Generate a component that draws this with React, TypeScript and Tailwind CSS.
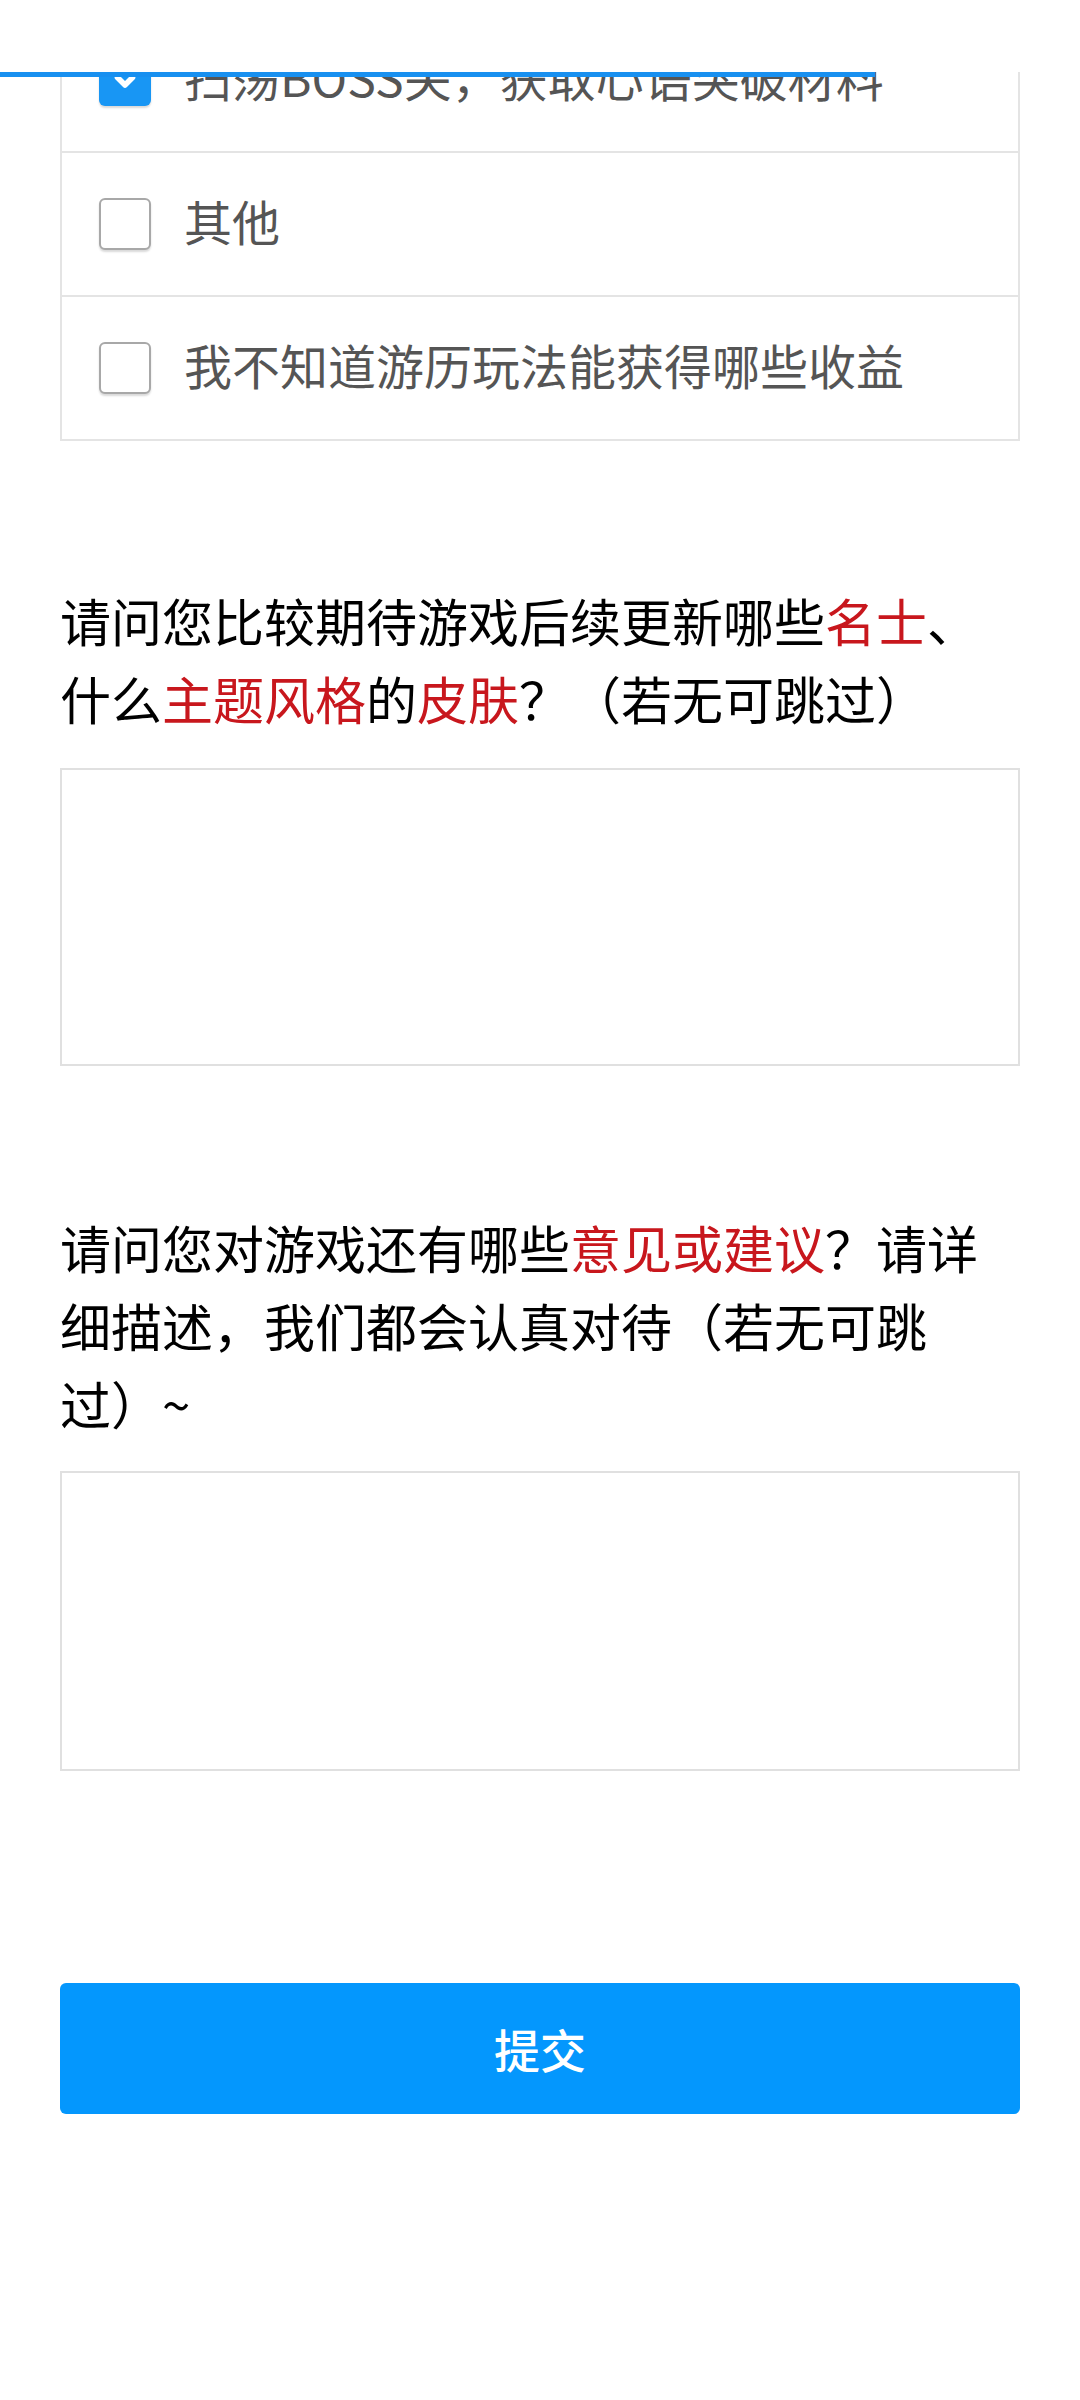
import { useState } from 'react'

const font = { fontFamily: '"Noto Sans CJK SC", "Noto Sans", sans-serif' }

type Option = { label: string; checked: boolean }

const initialOptions: Option[] = [
  { label: '扫荡BOSS关，获取心语突破材料', checked: true },
  { label: '其他', checked: false },
  { label: '我不知道游历玩法能获得哪些收益', checked: false },
]

function Checkbox({ checked }: { checked: boolean }) {
  if (checked) {
    return (
      <span className="flex h-[52px] w-[52px] shrink-0 items-center justify-center rounded-[6px] bg-[#1896f4] shadow-[0_2px_2px_rgba(0,0,0,0.15)]">
        <svg viewBox="0 0 24 24" className="h-[30px] w-[30px]" fill="none">
          <path d="M6 10 L12 16 L18 10" stroke="#fff" strokeWidth="4.5" strokeLinecap="round" strokeLinejoin="round" />
        </svg>
      </span>
    )
  }
  return (
    <span className="block h-[52px] w-[52px] shrink-0 rounded-[6px] border-2 border-[#a8a8a8] bg-white shadow-[0_2px_2px_rgba(0,0,0,0.15)]" />
  )
}

export default function App() {
  const [options, setOptions] = useState(initialOptions)

  const toggle = (i: number) => {
    setOptions(options.map((o, idx) => (idx === i ? { ...o, checked: !o.checked } : o)))
  }

  return (
    <div className="relative h-[2400px] w-[1080px] overflow-hidden bg-white [text-spacing-trim:space-all]" style={font}>
      {/* sticky header over the scrolled form */}
      <div className="absolute left-0 top-0 z-10 h-[72px] w-full bg-white" />
      <div className="absolute left-0 top-[72px] z-10 h-[5px] w-[875px] bg-[#1890f0]" />

      <div className="px-[60px] pt-[9px]">
        <div className="border-x-2 border-b-2 border-[#e4e4e4]">
          {options.map((o, i) => (
            <div
              key={o.label}
              onClick={() => toggle(i)}
              className={`flex h-[142px] items-center gap-[33px] pl-[37px] ${i > 0 ? 'border-t-2 border-[#e4e4e4] h-[144px]' : ''}`}
            >
              <Checkbox checked={o.checked} />
              <span className="-mt-[9px] text-[48px] leading-none text-[#555]">{o.label}</span>
            </div>
          ))}
        </div>

        <p className="mt-[140px] text-[51px] leading-[78px] text-black">
          请问您比较期待游戏后续更新哪些<span className="text-[#c8171d]">名士</span>、什么
          <span className="text-[#c8171d]">主题风格</span>的<span className="text-[#c8171d]">皮肤</span>？（若无可跳过）
        </p>
        <textarea className="mt-[31px] block h-[298px] w-full resize-none border-2 border-[#e0e0e0] outline-none" />

        <p className="mt-[142px] text-[51px] leading-[78px] text-black">
          请问您对游戏还有哪些<span className="text-[#c8171d]">意见或建议</span>？请详细描述，我们都会认真对待（若无可跳过）~
        </p>
        <textarea className="mt-[29px] block h-[300px] w-full resize-none border-2 border-[#e0e0e0] outline-none" />

        <button className="mt-[212px] flex h-[131px] w-full items-center justify-center rounded-[6px] bg-[#0497fd] text-[46px] font-medium text-white">
          提交
        </button>
      </div>
    </div>
  )
}
